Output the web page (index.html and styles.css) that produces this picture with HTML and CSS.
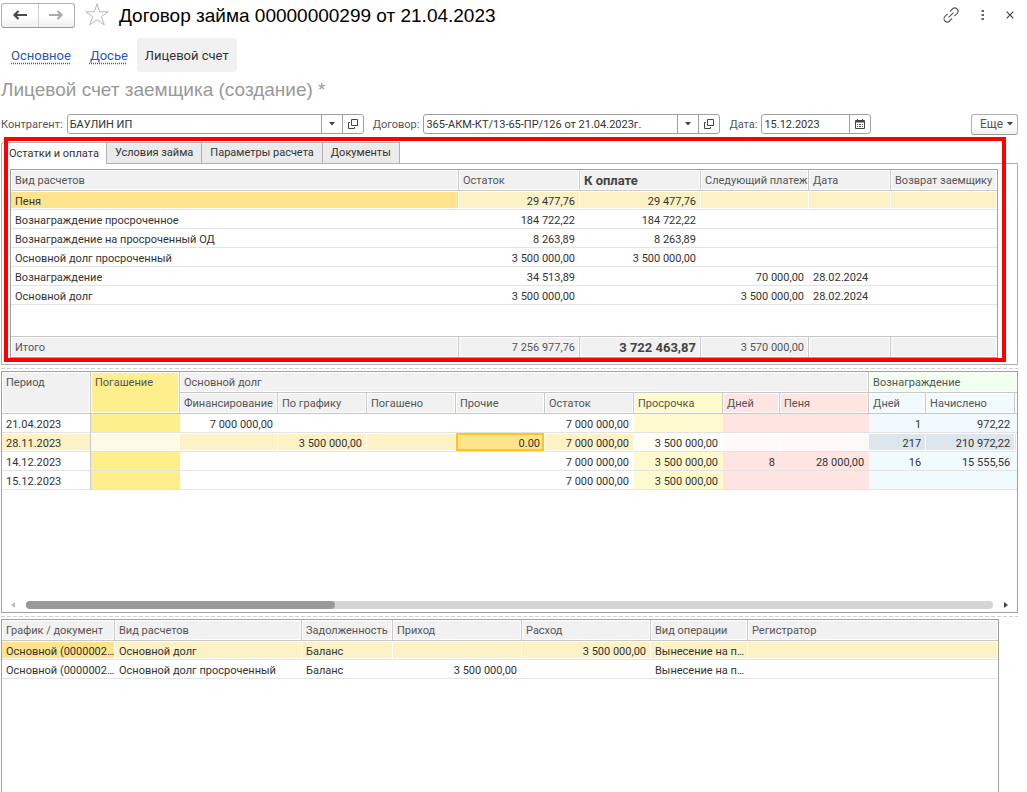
FILE: index.html
```html
<!DOCTYPE html>
<html lang="ru">
<head>
<meta charset="utf-8">
<title>Договор займа 00000000299 от 21.04.2023</title>
<link rel="stylesheet" href="styles.css">
</head>
<body>
<header class="titlebar">
  <div class="history">
    <button type="button" aria-label="Назад"><svg width="16" height="12" viewBox="0 0 16 12"><path d="M6.500 2 2.500 6 6.500 10M3 6h12" fill="none" stroke="#4a4a4a" stroke-width="2.200"/></svg></button>
    <button type="button" aria-label="Вперед"><svg width="16" height="12" viewBox="0 0 16 12"><path d="M9.500 2 13.500 6 9.500 10M13 6H1" fill="none" stroke="#aaa" stroke-width="2.200"/></svg></button>
  </div>
  <button type="button" class="icon star" aria-label="Избранное"><svg width="24" height="24" viewBox="0 0 24 24"><path d="M12 .8 14.600 8.800H23.300L16.300 13.700 19.300 21.800 12 16.800 4.700 21.800 7.700 13.700.7 8.800H9.400Z" fill="#fff" stroke="#b4b8bd" stroke-width="1"/></svg></button>
  <h1>Договор займа 00000000299 от 21.04.2023</h1>
  <div class="tools">
    <button type="button" class="icon" aria-label="Ссылка"><svg width="18" height="18" viewBox="0 0 18 18" fill="none" stroke="#555" stroke-width="1.100"><path transform="rotate(-45 9 9)" d="M7.500 5.800H3.700a3.200 3.200 0 0 0 0 6.400H7.500M10.500 5.800h3.800a3.200 3.200 0 0 1 0 6.400h-3.800M5.500 9h7"/></svg></button>
    <button type="button" class="icon" aria-label="Меню"><svg width="4" height="12" viewBox="0 0 4 12" fill="#666"><path d="M.5 1h2.500v2H.5zM.5 5h2.500v2H.5zM.5 9h2.500v2H.5z"/></svg></button>
    <button type="button" class="icon" aria-label="Закрыть"><svg width="8" height="8" viewBox="0 0 8 8"><path d="m.7.7 6.600 6.600M7.300.7.700 7.300" stroke="#444" stroke-width="1.200"/></svg></button>
  </div>
</header>

<nav class="sections">
  <a href="#main">Основное</a>
  <a href="#dossier">Досье</a>
  <a href="#account" class="current" aria-current="page">Лицевой счет</a>
</nav>

<h2>Лицевой счет заемщика (создание) *</h2>

<form class="fields">
  <label for="partner">Контрагент:</label>
  <div class="field wide">
    <input id="partner" type="text" value="БАУЛИН ИП">
    <button type="button" aria-label="Выбрать"><svg width="6" height="4" viewBox="0 0 6 4"><path d="M0 0h6L3 3.500z" fill="#444"/></svg></button>
    <button type="button" aria-label="Открыть"><svg width="10" height="10" viewBox="0 0 10 10" fill="none" stroke="#444"><path d="M3.500.5h6v6h-6zM2 3.500H.5v6h6V8"/></svg></button>
  </div>
  <label for="contract">Договор:</label>
  <div class="field wide">
    <input id="contract" type="text" value="365-АКМ-КТ/13-65-ПР/126 от 21.04.2023г.">
    <button type="button" aria-label="Выбрать"><svg width="6" height="4" viewBox="0 0 6 4"><path d="M0 0h6L3 3.500z" fill="#444"/></svg></button>
    <button type="button" aria-label="Открыть"><svg width="10" height="10" viewBox="0 0 10 10" fill="none" stroke="#444"><path d="M3.500.5h6v6h-6zM2 3.500H.5v6h6V8"/></svg></button>
  </div>
  <label for="date">Дата:</label>
  <div class="field date">
    <input id="date" type="text" value="15.12.2023">
    <button type="button" aria-label="Календарь"><svg width="10" height="10" viewBox="0 0 10 10"><path d="M.5 1.500h9v8h-9z" fill="#fff" stroke="#444"/><path d="M1 1h8v2.500H1zM2 0h1v1H2zM7 0h1v1H7zM2 5h1v1H2zM4 5h2v1H4zM7 5h1v1H7zM2 7h1v1H2zM4 7h2v1H4zM7 7h1v1H7z" fill="#444"/></svg></button>
  </div>
  <button type="button" class="more">Еще <svg width="6" height="4" viewBox="0 0 6 4"><path d="M0 0h6L3 3.500z" fill="#444"/></svg></button>
</form>

<section class="tabs">
  <div class="tablist" role="tablist">
    <button type="button" role="tab" aria-selected="true">Остатки и оплата</button>
    <button type="button" role="tab" aria-selected="false">Условия займа</button>
    <button type="button" role="tab" aria-selected="false">Параметры расчета</button>
    <button type="button" role="tab" aria-selected="false">Документы</button>
  </div>
  <div class="panel" role="tabpanel">
    <div class="grid balances">
      <table>
        <colgroup><col><col class="c121"><col class="c121"><col class="c108"><col class="c82"><col class="c106"></colgroup>
        <thead><tr><th>Вид расчетов</th><th>Остаток</th><th class="strong">К оплате</th><th>Следующий платеж</th><th>Дата</th><th>Возврат заемщику</th></tr></thead>
        <tbody>
          <tr class="selected"><td class="active">Пеня</td><td class="num">29 477,76</td><td class="num">29 477,76</td><td></td><td></td><td></td></tr>
          <tr><td>Вознаграждение просроченное</td><td class="num">184 722,22</td><td class="num">184 722,22</td><td></td><td></td><td></td></tr>
          <tr><td>Вознаграждение на просроченный ОД</td><td class="num">8 263,89</td><td class="num">8 263,89</td><td></td><td></td><td></td></tr>
          <tr><td>Основной долг просроченный</td><td class="num">3 500 000,00</td><td class="num">3 500 000,00</td><td></td><td></td><td></td></tr>
          <tr><td>Вознаграждение</td><td class="num">34 513,89</td><td></td><td class="num">70 000,00</td><td>28.02.2024</td><td></td></tr>
          <tr><td>Основной долг</td><td class="num">3 500 000,00</td><td></td><td class="num">3 500 000,00</td><td>28.02.2024</td><td></td></tr>
          <tr class="spacer"><td colspan="6"></td></tr>
        </tbody>
        <tfoot><tr><td>Итого</td><td class="num">7 256 977,76</td><td class="num strong">3 722 463,87</td><td class="num">3 570 000,00</td><td></td><td></td></tr></tfoot>
      </table>
    </div>
  </div>
  <div class="highlight"></div>
</section>

<div class="splitter"></div>

<section class="grid periods">
  <table>
    <colgroup><col class="c89"><col class="c89"><col class="c98"><col class="c89"><col class="c89"><col class="c89"><col class="c89"><col class="c89"><col class="c57"><col class="c89"><col class="c57"><col class="c89"><col></colgroup>
    <thead>
      <tr><th rowspan="2">Период</th><th rowspan="2" class="gold">Погашение</th><th colspan="8">Основной долг</th><th colspan="3" class="green">Вознаграждение</th></tr>
      <tr><th>Финансирование</th><th>По графику</th><th>Погашено</th><th>Прочие</th><th>Остаток</th><th class="lemon">Просрочка</th><th class="pink">Дней</th><th class="pink">Пеня</th><th class="blue">Дней</th><th class="blue">Начислено</th><th class="blue"></th></tr>
    </thead>
    <tbody>
      <tr><td class="period">21.04.2023</td><td class="gold"></td><td class="num">7 000 000,00</td><td></td><td></td><td></td><td class="num">7 000 000,00</td><td class="num lemon"></td><td class="pink"></td><td class="pink"></td><td class="num blue">1</td><td class="num blue">972,22</td><td class="green"></td></tr>
      <tr class="selected"><td class="period">28.11.2023</td><td class="gold"></td><td></td><td class="num">3 500 000,00</td><td></td><td class="num editing">0.00</td><td class="num">7 000 000,00</td><td class="num lemon">3 500 000,00</td><td class="pink"></td><td class="pink"></td><td class="num blue">217</td><td class="num blue">210 972,22</td><td class="green"></td></tr>
      <tr><td class="period">14.12.2023</td><td class="gold"></td><td></td><td></td><td></td><td></td><td class="num">7 000 000,00</td><td class="num lemon">3 500 000,00</td><td class="num pink">8</td><td class="num pink">28 000,00</td><td class="num blue">16</td><td class="num blue">15 555,56</td><td class="green"></td></tr>
      <tr><td class="period">15.12.2023</td><td class="gold"></td><td></td><td></td><td></td><td></td><td class="num">7 000 000,00</td><td class="num lemon">3 500 000,00</td><td class="pink"></td><td class="pink"></td><td class="blue"></td><td class="blue"></td><td class="green"></td></tr>
    </tbody>
  </table>
  <div class="scrollbar">
    <svg width="4" height="6" viewBox="0 0 4 6"><path d="M4 0v6L0 3z" fill="#bbb"/></svg>
    <div class="track"><div class="thumb"></div></div>
    <svg width="4" height="6" viewBox="0 0 4 6"><path d="M0 0v6l4-3z" fill="#444"/></svg>
  </div>
</section>

<div class="splitter"></div>

<section class="grid moves">
  <table>
    <colgroup><col class="c113"><col class="c187"><col class="c91"><col class="c129"><col class="c129"><col class="c97"><col></colgroup>
    <thead><tr><th>График / документ</th><th>Вид расчетов</th><th>Задолженность</th><th>Приход</th><th>Расход</th><th>Вид операции</th><th>Регистратор</th></tr></thead>
    <tbody>
      <tr class="selected"><td class="active">Основной (0000002…</td><td>Основной долг</td><td>Баланс</td><td></td><td class="num">3 500 000,00</td><td>Вынесение на п…</td><td></td></tr>
      <tr><td>Основной (0000002…</td><td>Основной долг просроченный</td><td>Баланс</td><td class="num">3 500 000,00</td><td></td><td>Вынесение на п…</td><td></td></tr>
    </tbody>
  </table>
</section>
</body>
</html>
```
FILE: styles.css
```css
* { box-sizing: border-box; }

body {
  margin: 0;
  padding: 0 9px 0 1px;
  min-height: 100vh;
  display: flex;
  flex-direction: column;
  background: #fff;
  color: #333;
  font: 11px/14px Roboto, "Liberation Sans", sans-serif;
}

button, input { font: inherit; color: inherit; }
button { padding: 0; border: 0; background: none; }
svg { display: block; flex: none; }

/* Title */
.titlebar { display: flex; align-items: center; height: 30px; }
.history {
  display: flex;
  width: 74px;
  height: 25px;
  border: 1px solid #b0b0b0;
  border-bottom-color: #999;
  border-radius: 3px;
  background: linear-gradient(#fff 50%, #f0f0f0);
}
.history button { flex: 1; display: flex; align-items: center; justify-content: center; }
.history button + button { border-left: 1px solid #d0d0d0; }
.icon { display: flex; align-items: center; justify-content: center; }
.star { margin: 0 10px; }
h1 { margin: 0; padding-top: 2px; font: 19px/24px "Liberation Sans", sans-serif; color: #000; }
.tools { display: flex; align-items: center; gap: 21px; margin-left: auto; padding-right: 4px; }

/* Section links */
.sections { display: flex; margin-top: 8px; font-size: 13px; line-height: 16px; }
.sections a {
  padding: 10px 9px 8px 10px;
  height: 34px;
  color: #2a56c0;
  text-decoration: underline dotted;
  text-underline-offset: 3px;
}
.sections .current {
  padding: 10px 8px 8px;
  border-radius: 4px;
  background: #f1f1f1;
  color: #333;
  text-decoration: none;
}
h2 { margin: 6px 0 0; font: 19px/24px "Liberation Sans", sans-serif; color: #999; }

/* Fields */
.fields { display: flex; align-items: center; margin-top: 11px; height: 22px; color: #555; }
.fields label { flex: none; margin-right: 4px; padding-top: 1px; }
.field {
  display: flex;
  height: 20px;
  margin-right: 9px;
  border: 1px solid #a0a0a0;
  border-radius: 3px;
  background: #fff;
}
.field.wide { width: 297px; }
.field.date { width: 110px; }
.field input {
  flex: 1;
  min-width: 0;
  padding: 1px 2px 0;
  border: 0;
  outline: 0;
  background: none;
  color: #333;
}
.field button {
  width: 21px;
  display: flex;
  align-items: center;
  justify-content: center;
  border-left: 1px solid #a0a0a0;
}
.more {
  display: flex;
  align-items: center;
  justify-content: center;
  gap: 4px;
  width: 47px;
  height: 21px;
  margin-left: auto;
  padding-left: 4px;
  border: 1px solid #b0b0b0;
  border-bottom-color: #999;
  border-radius: 3px;
  background: linear-gradient(#fff 50%, #f0f0f0);
  font-size: 12px;
}

/* Tabs */
.tabs { position: relative; margin-top: 7px; }
.tablist { display: flex; }
.tablist button {
  height: 21px;
  padding: 0 8px;
  border: 1px solid #b0b0b0;
  border-width: 1px 1px 0 0;
  background: #ebebeb;
}
.tablist [aria-selected="true"] {
  position: relative;
  height: 22px;
  margin-bottom: -1px;
  padding: 0 7px;
  border-left-width: 1px;
  border-top-left-radius: 3px;
  background: #fff;
}
.panel { padding: 5px 19px 6px 8px; border: 1px solid #b0b0b0; }
.highlight {
  position: absolute;
  inset: -5px 12px 3px 3px;
  border: 4px solid #f00;
  pointer-events: none;
}

.splitter {
  height: 1px;
  margin: 3px 0 2px;
  background: repeating-linear-gradient(90deg, #d0d0d0 0 4px, #fff 4px 6px);
}

/* Data grids */
.grid { border: 1px solid #a0a0a0; background: #fff; }
.grid table { width: 100%; table-layout: fixed; border-spacing: 0; }
.grid th, .grid td { padding: 0 4px; overflow: hidden; white-space: nowrap; text-align: left; }
.grid th, .grid tfoot td {
  height: 21px;
  border-right: 1px solid #c8c8c8;
  background: #f1f1f1;
  box-shadow: inset 0 0 0 1px #fff;
  color: #555;
  font-weight: 400;
}
.grid th { padding: 1px 0 0 4px; border-bottom: 1px solid #c8c8c8; }
.grid tfoot td { height: 21px; padding-top: 1px; border-top: 1px solid #c8c8c8; }
.grid th:last-child, .grid tfoot td:last-child { border-right: 0; }
.grid tbody td { height: 19px; padding-top: 3px; border-bottom: 1px solid #e3e3e3; }
.grid td.num { text-align: right; padding-right: 5px; }
.grid tfoot td.num { padding-right: 4px; }
.grid .strong { font-size: 13px; font-weight: 700; color: #444; }
.grid .spacer td { height: 31px; border: 0; }
.grid .selected td {
  border-right: 1px solid #fff;
  background: #fdf1c6;
  box-shadow: inset 0 1px #fff, inset 0 -1px #fff;
}
.grid .selected td.num { padding-right: 4px; }
.grid .selected td.active { background: #ffe48d; }

.grid .gold { background: #ffee8c; }
.grid .lemon { background: #fffacd; }
.grid .pink { background: #ffe4e1; }
.grid .blue { background: #f0faff; }
.grid .green { background: #f0fff0; }
.grid .selected .gold { background: #fffae3; }
.grid .selected .lemon { background: #fffef4; }
.grid .selected .pink { background: #fff9f8; }
.grid .selected .blue { background: #dde6ec; }
.grid .selected .green { background: #dde8dd; }
.grid .selected .editing {
  border-right-color: #fff;
  background: #ffe48d;
  box-shadow: inset 0 0 0 2px #fcc61e;
}

.periods { display: flex; flex-direction: column; height: 242px; }
.periods th[rowspan] { vertical-align: top; padding-top: 4px; }
.grid tbody .period, .grid .selected .period { border-right: 1px solid #c8c8c8; }
.scrollbar {
  display: flex;
  align-items: center;
  gap: 11px;
  margin-top: auto;
  padding: 0 9px 3px;
}
.track { flex: 1; height: 8px; border-radius: 4px; background: #d5d5d5; }
.thumb { width: 32%; height: 8px; border-radius: 4px; background: #999; }

.moves { flex: 1; margin-right: 19px; border-bottom: 0; }

.c57 { width: 57px; }
.c82 { width: 82px; }
.c89 { width: 89px; }
.c91 { width: 91px; }
.c97 { width: 97px; }
.c98 { width: 98px; }
.c106 { width: 106px; }
.c108 { width: 108px; }
.c113 { width: 113px; }
.c121 { width: 121px; }
.c129 { width: 129px; }
.c187 { width: 187px; }
```
